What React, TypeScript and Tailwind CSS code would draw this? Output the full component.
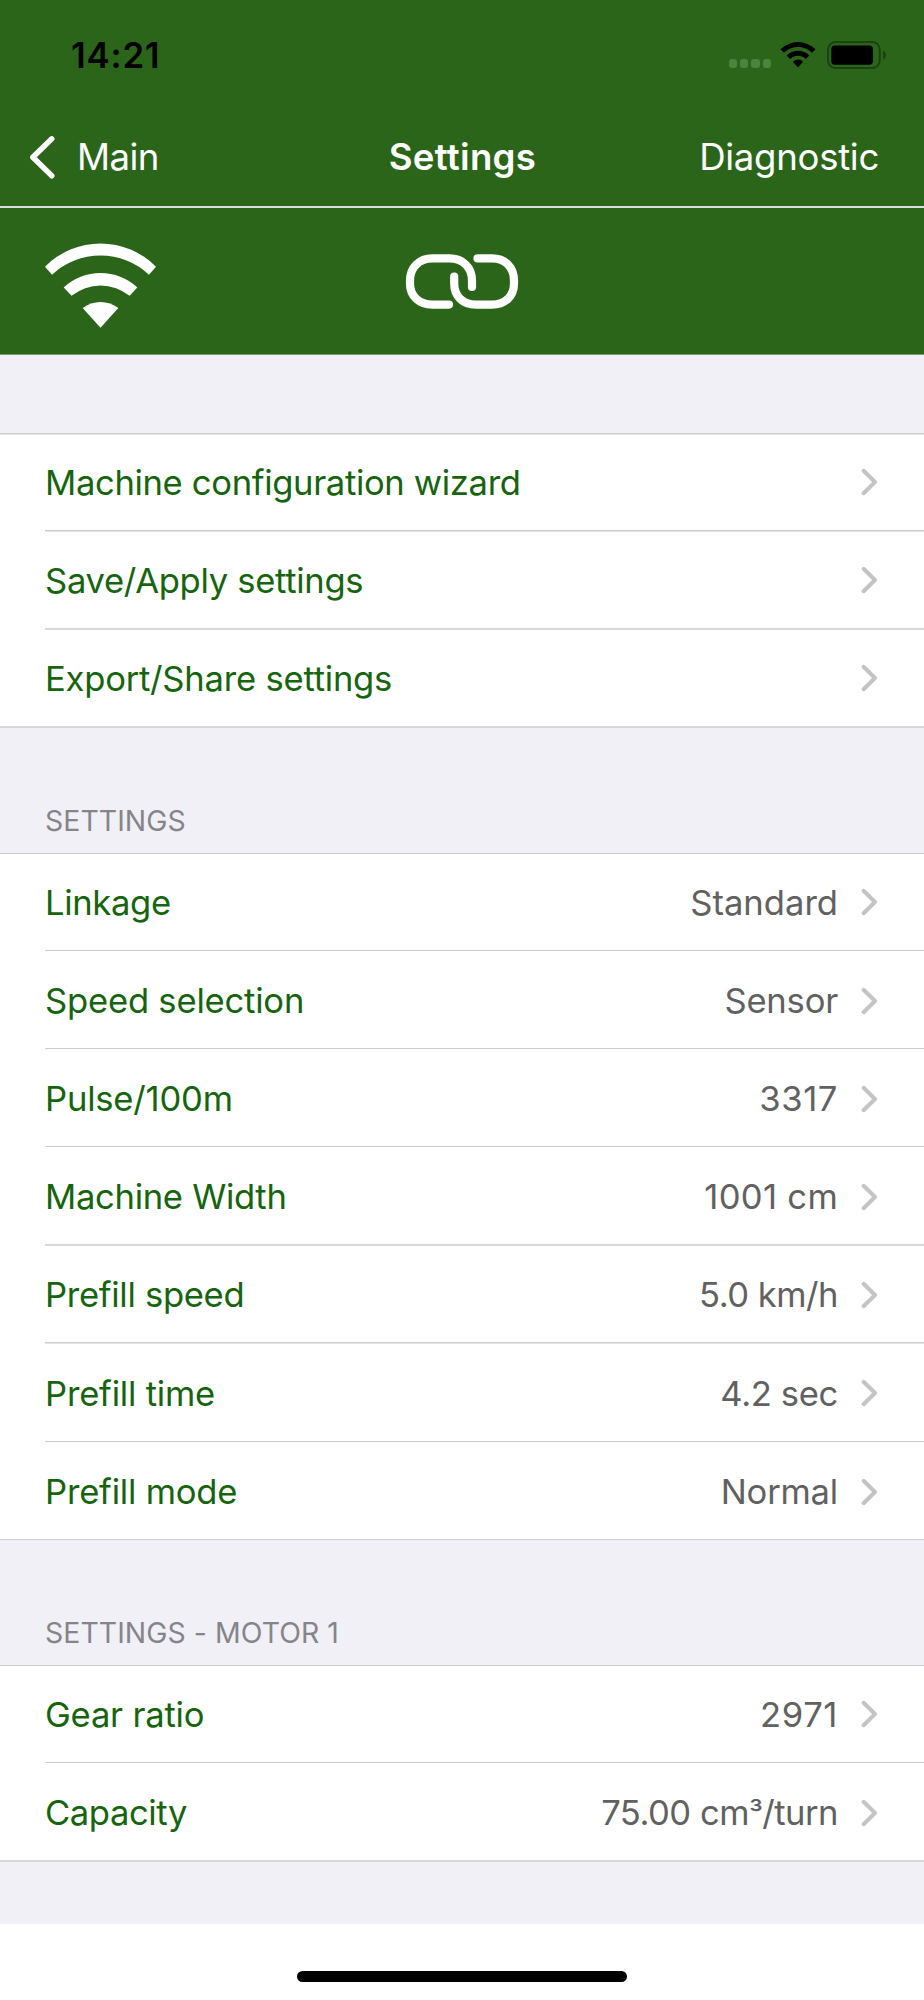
type Item = { label: string; value?: string; row: string; labelSpacing?: string; valueSpacing?: string; line?: string };

const THIN = "h-px bg-[#cbcbcd]";
const EVEN = "h-[2px] bg-[#d8d8da]";
const FADE = "h-[2px] border-t border-[#cbcbcd] bg-[#e6e6e8]";

const actions: Item[] = [
  { label: "Machine configuration wizard", row: "h-[95px] pb-px", labelSpacing: "tracking-[-0.34px]", line: FADE },
  { label: "Save/Apply settings", row: "h-[96px]", labelSpacing: "tracking-[-0.3px]", line: EVEN },
  { label: "Export/Share settings", row: "h-[96px]", labelSpacing: "tracking-[-0.22px]" },
];

const general: Item[] = [
  { label: "Linkage", value: "Standard", row: "h-[96px]", labelSpacing: "tracking-[-0.33px]" },
  { label: "Speed selection", value: "Sensor", row: "h-[97px] pt-[2px]", valueSpacing: "tracking-[-0.2px]" },
  { label: "Pulse/100m", value: "3317", row: "h-[97px] pt-[2px]", valueSpacing: "tracking-[0.6px]" },
  { label: "Machine Width", value: "1001 cm", row: "h-[97px] pt-[2px]", labelSpacing: "tracking-[-0.3px]", valueSpacing: "tracking-[0.3px]", line: EVEN },
  { label: "Prefill speed", value: "5.0 km/h", row: "h-[96px] pt-px", labelSpacing: "tracking-[-0.3px]", valueSpacing: "tracking-[-0.5px]", line: FADE },
  { label: "Prefill time", value: "4.2 sec", row: "h-[97px] pt-px", valueSpacing: "tracking-[-0.35px]" },
  { label: "Prefill mode", value: "Normal", row: "h-[97px] pt-[2px]", valueSpacing: "tracking-[-0.2px]" },
];

const motor: Item[] = [
  { label: "Gear ratio", value: "2971", row: "h-[96px]", valueSpacing: "tracking-[0.6px]" },
  { label: "Capacity", value: "75.00 cm³/turn", row: "h-[97px] pt-[2px]", labelSpacing: "tracking-[-0.4px]", valueSpacing: "tracking-[-0.5px]" },
];

function Chevron() {
  return (
    <svg className="ml-[23px] h-[28px] w-[17px] shrink-0" viewBox="0 0 17 28" fill="none">
      <path d="M2.6 2.8 14 14 2.6 25.2" stroke="#c4c4c6" strokeWidth="4" strokeLinecap="round" strokeLinejoin="round" />
    </svg>
  );
}

function Row({ item, last }: { item: Item; last: boolean }) {
  return (
    <li>
      <div className={`flex items-center pr-[46px] pl-[45px] ${item.row}`}>
        <span className={`flex-1 text-[34.6px] leading-none text-[#16640e] ${item.labelSpacing ?? "tracking-[-0.2px]"}`}>
          {item.label}
        </span>
        {item.value && (
          <span className={`text-[34.6px] leading-none text-[#616161] ${item.valueSpacing ?? ""}`}>
            {item.value.split(/(³)/).map((part, i) =>
              part === "³" ? (
                <span key={i} className="text-[31px] leading-none">
                  {part}
                </span>
              ) : (
                part
              ),
            )}
          </span>
        )}
        <Chevron />
      </div>
      {!last && <div className={`ml-[45px] ${item.line ?? THIN}`} />}
    </li>
  );
}

function Group({ items, top, bottom }: { items: Item[]; top: string; bottom: string }) {
  return (
    <section className="bg-white">
      <div className={top} />
      <ul>
        {items.map((item, i) => (
          <Row key={item.label} item={item} last={i === items.length - 1} />
        ))}
      </ul>
      <div className={bottom} />
    </section>
  );
}

function SectionTitle({ text, className }: { text: string; className: string }) {
  return (
    <h2 className={`flex items-end pl-[45px] text-[28.4px] leading-none tracking-[0.06px] text-[#858589] ${className}`}>
      {text}
    </h2>
  );
}

function StatusIcons() {
  return (
    <div className="flex items-center">
      <div className="mt-[18px] flex gap-[3px]">
        {[0, 1, 2, 3].map((i) => (
          <span key={i} className="size-[8.3px] rounded-[3px] bg-[#4c843e]" />
        ))}
      </div>
      <svg className="ml-[9px] h-[28px] w-[36px]" viewBox="0 0 36 28" fill="#000">
        <path d="M.5 8.2a25 25 0 0 1 35 0l-3.5 3.5a20 20 0 0 0-28 0Z" />
        <path d="M6.7 14.4a16.2 16.2 0 0 1 22.6 0L25.8 18a11.2 11.2 0 0 0-15.6 0Z" />
        <path d="M12.9 20.7a7.3 7.3 0 0 1 10.2 0L18 26.6Z" />
      </svg>
      <svg className="ml-[11px] h-[28px] w-[60px]" viewBox="0 0 60 28">
        <rect x="1.1" y="1.1" width="51.6" height="26" rx="7.5" fill="none" stroke="#1b4210" strokeWidth="2" />
        <rect x="4.3" y="4.5" width="41.6" height="19.2" rx="3.5" fill="#000" />
        <path d="M56 9.7c4 1.6 4 7.4 0 9Z" fill="#1b4210" />
      </svg>
    </div>
  );
}

function BackIcon() {
  return (
    <svg className="h-[44px] w-[27px]" viewBox="0 0 27 44" fill="none">
      <path d="M22.8 3.8 3.8 22.3l19 18.5" stroke="#fff" strokeWidth="5.4" strokeLinecap="round" strokeLinejoin="round" />
    </svg>
  );
}

function WifiIcon() {
  return (
    <svg className="h-[86px] w-[112px]" viewBox="0 0 112 86" fill="#fff">
      <path d="M0 23.7a78 78 0 0 1 111 0l-7 8a71 71 0 0 0-97 0Z" />
      <path d="M18.7 44.4a54.5 54.5 0 0 1 73.6 0L84.6 52.8a46 46 0 0 0-58 0Z" />
      <path d="M37.7 65a29 29 0 0 1 35.6 0L55.5 84.7Z" />
    </svg>
  );
}

function LinkIcon() {
  return (
    <svg
      className="h-[56px] w-[114px]"
      viewBox="0 0 114 56"
      fill="none"
      stroke="#fff"
      strokeWidth="8.2"
      strokeLinecap="round"
      strokeLinejoin="round"
    >
      <path d="M44 50.6H27.5C14 50.6 5 42 5 29.5V26.5C5 13.5 14 4.4 27.5 4.4H44.5C58 4.4 67 13.5 67 26.5V33" />
      <path d="M72.5 4.4H87C100.5 4.4 109 13.5 109 26.5V29.5C109 42 100.5 50.6 87 50.6H71C57.5 50.6 49.2 42 49.2 29.5V22.5" />
    </svg>
  );
}

export default function App() {
  return (
    <div className="flex min-h-[2000px] w-[924px] flex-col bg-white font-['Inter',sans-serif]">
      <header className="bg-[#2b6519]">
        <div className="flex h-[109px] items-center justify-between pr-[37px] pl-[71px]">
          <span className="pt-[2px] text-[34.8px] leading-none font-semibold tracking-[0.8px] text-black">14:21</span>
          <StatusIcons />
        </div>
        <nav className="grid h-[97px] grid-cols-3 items-center pr-[45px] pb-px pl-[29px] text-[36.6px] leading-none text-white">
          <a className="flex items-center gap-[21px] tracking-[-0.6px]">
            <BackIcon />
            Main
          </a>
          <h1 className="pl-[17px] text-center font-semibold tracking-[0.3px]">Settings</h1>
          <a className="text-right tracking-[-0.3px]">Diagnostic</a>
        </nav>
        <div className="h-[2px] bg-[#dedede]" />
        <div className="flex h-[146px] items-start pl-[45px]">
          <div className="mt-[35px] w-[360px]">
            <WifiIcon />
          </div>
          <div className="mt-[46px]">
            <LinkIcon />
          </div>
        </div>
        <div className="h-px bg-[#7b9c75]" />
      </header>
      <main className="bg-[#f1f0f6] pt-[78px] pb-[62px]">
        <Group items={actions} top={FADE} bottom={EVEN} />
        <SectionTitle text="SETTINGS" className="h-[125px] pb-[18px]" />
        <Group items={general} top={THIN} bottom={THIN} />
        <SectionTitle text="SETTINGS - MOTOR 1" className="h-[125px] pb-[18px]" />
        <Group items={motor} top={THIN} bottom={EVEN} />
      </main>
      <footer className="flex flex-1 items-end justify-center pb-[18px]">
        <div className="h-[11px] w-[330px] rounded-full bg-black" />
      </footer>
    </div>
  );
}
